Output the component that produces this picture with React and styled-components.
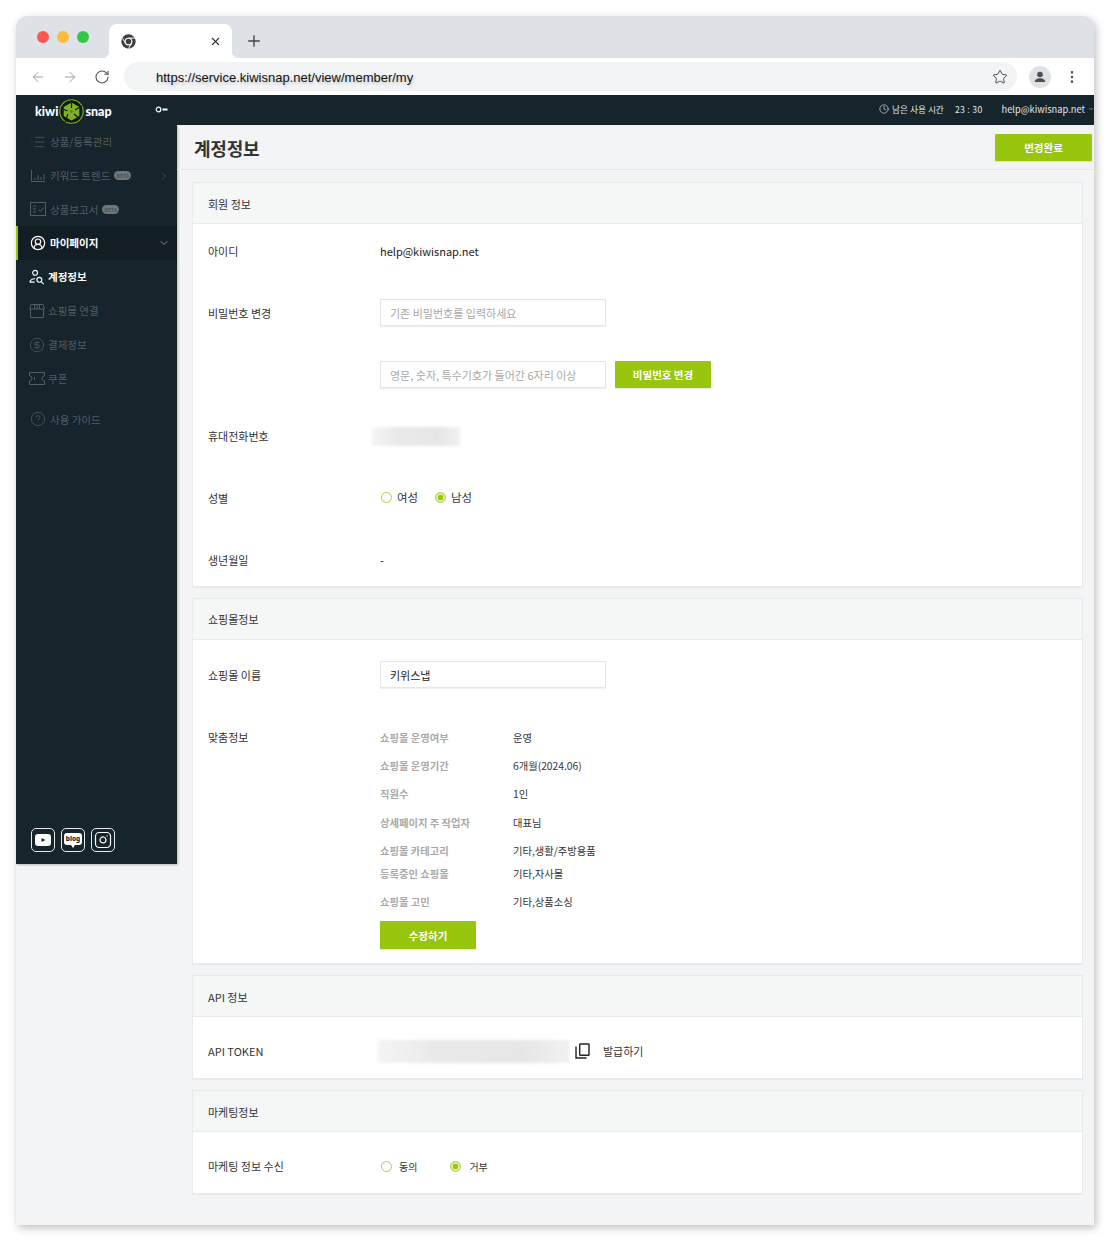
import React from 'react'
import styled, { createGlobalStyle } from 'styled-components'
import { ChevronDown, ChevronRight, Star, MoreVertical, ArrowLeft, ArrowRight, RotateCw, Plus, X, CircleHelp, CircleDollarSign, CircleUserRound, Clock, List, Instagram } from 'lucide-react'

const Global = createGlobalStyle`
    html, body { margin: 0; padding: 0; background: #fff; }
    body { font-family: "Noto Sans CJK KR", "Noto Sans", sans-serif; color: #222; }
    * { box-sizing: border-box; }
`

const green = '#98c60e'
const dark = '#16242b'
const dim = '#525e64'

const Page = styled.div`
    width: 1110px;
    height: 1243px;
    padding: 16px 16px 18px 16px;
    overflow: hidden;
`
const BrowserWindow = styled.div`
    width: 1078px;
    height: 1209px;
    border-radius: 12px 12px 0 0;
    overflow: hidden;
    background: #f3f4f5;
    box-shadow: 2px 3px 8px rgba(0, 0, 0, 0.25);
    display: flex;
    flex-direction: column;
`
const TabStrip = styled.div`
    height: 42px;
    flex: none;
    background: #dee1e6;
    display: flex;
    align-items: flex-end;
    padding-left: 21px;
`
const Dots = styled.div`
    display: flex;
    gap: 8px;
    align-self: flex-start;
    margin-top: 15px;
    margin-right: 20px;
`
const Dot = styled.span`
    width: 12px;
    height: 12px;
    border-radius: 50%;
    background: ${p => p.$color};
`
const Tab = styled.div`
    position: relative;
    width: 123px;
    height: 34px;
    background: #fff;
    border-radius: 8px 8px 0 0;
    display: flex;
    align-items: center;
    justify-content: space-between;
    padding: 0 10px 0 12px;
    color: #333;
    &::before, &::after {
        content: "";
        position: absolute;
        bottom: 0;
        width: 7px;
        height: 7px;
    }
    &::before {
        left: -7px;
        background: radial-gradient(circle at 0 0, transparent 7px, #fff 7.5px);
    }
    &::after {
        right: -7px;
        background: radial-gradient(circle at 100% 0, transparent 7px, #fff 7.5px);
    }
`
const NewTab = styled.div`
    margin-left: 13px;
    height: 34px;
    display: flex;
    align-items: center;
    color: #444;
`
const Toolbar = styled.div`
    height: 37px;
    flex: none;
    background: #fff;
    display: flex;
    align-items: center;
    padding-left: 14px;
    color: #999;
`
const NavIcons = styled.div`
    display: flex;
    gap: 16px;
    width: 94px;
`
const AddressBar = styled.div`
    width: 893px;
    height: 29px;
    border-radius: 15px;
    background: #f1f3f4;
    display: flex;
    align-items: center;
    justify-content: space-between;
    padding: 1px 9px 0 32px;
    font-family: "Liberation Sans", Arial, sans-serif;
    font-size: 13px;
    color: #111;
    text-shadow: 1px 2px 3px rgba(0, 0, 0, 0.2);
`
const Avatar = styled.div`
    width: 22px;
    height: 22px;
    margin-left: 12px;
    border-radius: 50%;
    background: #dfe1e5;
    display: flex;
    align-items: center;
    justify-content: center;
`
const Kebab = styled.div`
    margin-left: 13px;
    color: #555;
    display: flex;
`
const TopBar = styled.div`
    height: 30px;
    flex: none;
    background: ${dark};
    color: #e3e6e8;
    display: flex;
    align-items: center;
    justify-content: space-between;
    font-size: 8.7px;
    padding: 0 0 2px 19px;
`
const Logo = styled.div`
    display: flex;
    align-items: center;
    width: 120px;
    margin-top: 4px;
    font-family: "Lato", "Noto Sans", sans-serif;
    font-weight: 900;
    font-size: 12.5px;
    color: #fff;
    gap: 1px;
`
const KeyMark = styled.div`
    display: flex;
    align-items: center;
    margin-right: auto;
`
const TopInfo = styled.div`
    display: flex;
    align-items: center;
    gap: 3px;
`
const Timer = styled.span`
    margin: 0 16px 0 8px;
    letter-spacing: 0.3px;
`
const Account = styled.span`
    font-size: 9.3px;
`
const AppBody = styled.div`
    flex: 1;
    display: flex;
    align-items: flex-start;
`
const Sidebar = styled.nav`
    width: 161px;
    height: 739px;
    flex: none;
    background: ${dark};
    display: flex;
    flex-direction: column;
    box-shadow: 1px 1px 2px rgba(0, 0, 0, 0.25);
`
const MenuItem = styled.div`
    height: 33.8px;
    flex: none;
    display: flex;
    align-items: center;
    gap: ${p => p.$sub ? 3 : 4}px;
    padding-left: ${p => p.$open ? 12 : p.$sub ? 13 : 14}px;
    padding-bottom: ${p => p.$on ? 1 : 0}px;
    font-size: 10.5px;
    font-weight: ${p => p.$on ? 700 : 400};
    color: ${p => p.$on ? '#fff' : dim};
    background: ${p => p.$open ? '#121e24' : 'transparent'};
    border-left: ${p => p.$open ? `2px solid ${green}` : 'none'};
    margin-top: ${p => p.$gap || 0}px;
`
const MenuIcon = styled.span`
    width: 16px;
    height: 16px;
    flex: none;
    display: flex;
    align-items: center;
    justify-content: center;
`
const Badge = styled.span`
    width: 17px;
    text-align: center;
    overflow: hidden;
    font-size: 5px;
    line-height: 9px;
    height: 9px;
    border-radius: 5px;
    background: #6c777c;
    color: #48545a;
    font-weight: 700;
`
const Caret = styled.span`
    margin-left: auto;
    margin-right: 7px;
    display: flex;
    color: ${p => p.$color || dim};
`
const Socials = styled.div`
    margin-top: auto;
    margin-bottom: 12px;
    display: flex;
    gap: 6px;
    padding-left: 15px;
`
const SocialBox = styled.div`
    width: 24px;
    height: 24px;
    border: 1px solid #e4e8ea;
    border-radius: 5px;
    display: flex;
    align-items: center;
    justify-content: center;
    color: #fff;
`
const BlogBubble = styled.span`
    position: relative;
    background: #fff;
    color: ${dark};
    font-size: 6.5px;
    line-height: 12px;
    font-weight: 800;
    font-family: "Noto Sans", sans-serif;
    padding: 0 2px;
    border-radius: 3px;
    margin-top: -2px;
    &::after {
        content: "";
        position: absolute;
        left: 7px;
        bottom: -3px;
        border-left: 2px solid transparent;
        border-right: 2px solid transparent;
        border-top: 3px solid #fff;
    }
`
const Main = styled.main`
    flex: 1;
    min-width: 0;
`
const PageHead = styled.div`
    height: 45px;
    border-bottom: 1px solid #e6e7e8;
    display: flex;
    align-items: center;
    justify-content: space-between;
    padding: 0 2px 0 17px;
`
const PageTitle = styled.h1`
    margin: 0;
    padding-top: 2px;
    font-size: 18px;
    font-weight: 700;
    color: #333;
    letter-spacing: -0.2px;
`
const GreenButton = styled.button`
    width: ${p => p.$w}px;
    height: ${p => p.$h || 27}px;
    margin-top: ${p => p.$top || 0}px;
    margin-left: ${p => p.$left || 0}px;
    border: none;
    border-radius: 1px;
    background: ${green};
    color: #fff;
    font-family: inherit;
    font-size: 10.5px;
    font-weight: 700;
    padding: 0;
    box-shadow: 0 1px 1px rgba(0, 0, 0, 0.1);
`
const Sections = styled.div`
    padding: 12px 11px 0 15px;
    display: flex;
    flex-direction: column;
    gap: 11px;
`
const Section = styled.section`
    background: #fff;
    border: 1px solid #e8e9ea;
    box-shadow: 0 1px 1px rgba(0, 0, 0, 0.04);
`
const SectionHead = styled.div`
    height: 41px;
    background: #f5f6f6;
    border-bottom: 1px solid #e9eaeb;
    display: flex;
    align-items: center;
    padding: 1px 0 0 15px;
    font-size: 11px;
    color: #333;
`
const SectionBody = styled.div`
    padding: ${p => p.$pad};
    display: flex;
    flex-direction: column;
    gap: ${p => p.$gap || 0}px;
`
const Row = styled.div`
    display: grid;
    grid-template-columns: 172px 1fr;
    align-items: ${p => p.$top ? 'start' : 'center'};
    min-height: 28px;
    color: #222;
`
const Label = styled.div`
    font-size: 11px;
    color: #333;
    line-height: ${p => p.$top ? '28px' : 'normal'};
`
const Value = styled.div`
    display: flex;
    align-items: center;
    font-size: 11px;
`
const TextBox = styled.div`
    width: 226px;
    height: 27px;
    border: 1px solid #e6e6e6;
    box-shadow: 0 1px 1px rgba(0, 0, 0, 0.06);
    background: #fff;
    display: flex;
    align-items: center;
    padding-left: 9px;
    font-size: 11px;
    color: ${p => p.$filled ? '#222' : '#a8a8a8'};
`
const Blurred = styled.div`
    width: ${p => p.$w}px;
    height: ${p => p.$h}px;
    margin-left: ${p => p.$left}px;
    background: linear-gradient(90deg, #f4f4f4, #e9e9e9 30%, #e6e6e6 75%, #f1f1f1);
    filter: blur(1.5px);
`
const Radios = styled.div`
    display: flex;
    align-items: center;
    padding-left: 1px;
    padding-bottom: ${p => p.$lift || 0}px;
`
const RadioLabel = styled.label`
    display: flex;
    align-items: center;
    font-size: ${p => p.$size}px;
    color: #333;
    gap: ${p => p.$gap}px;
    margin-right: ${p => p.$right}px;
`
const RadioCircle = styled.span`
    width: 11px;
    height: 11px;
    border-radius: 50%;
    border: 1px solid #abd13f;
    background: ${p => p.$on ? `radial-gradient(circle, #98c60e 0 2.4px, #dcebb0 3px)` : '#fff'};
`
const InfoTable = styled.div`
    display: flex;
    flex-direction: column;
`
const InfoRow = styled.div`
    display: grid;
    grid-template-columns: 133px 1fr;
    align-items: center;
    height: 28.3px;
    margin-top: ${p => p.$tight ? -5 : 0}px;
`
const InfoKey = styled.div`
    font-size: 10.3px;
    font-weight: 700;
    color: #a9a9a9;
`
const InfoValue = styled.div`
    font-size: 10.3px;
    color: #333;
`
const Issue = styled.span`
    font-size: 11px;
    color: #333;
    margin-left: 13px;
`
const CopyWrap = styled.span`
    display: flex;
    margin-left: 5px;
`

const ChromeLogo = () => (
    <svg width="15" height="15" viewBox="0 0 24 24">
        <circle cx="12" cy="12" r="11.5" fill="#3c4043" />
        <path d="M12 6.5h10M7.2 15L2.4 6.7M16.8 15l-5 8.6" stroke="#fff" strokeWidth="1.6" />
        <circle cx="12" cy="12" r="6.2" fill="#fff" />
        <circle cx="12" cy="12" r="4.4" fill="#3c4043" />
    </svg>
)

const Aperture = () => (
    <svg width="25" height="25" viewBox="0 0 25 25">
        <circle cx="12.5" cy="12.5" r="11.7" fill="#101a14" stroke="#8ab52b" strokeWidth="1.1" />
        <path d="M12.5 3.5l7.8 4.5v9l-7.8 4.5-7.8-4.5v-9z" fill="#7fb02a" />
        <path d="M12.5 1v8M23 7l-7 4M21 20l-6-5M6 23l3-8M1.5 9l7 3" stroke="#101a14" strokeWidth="1.1" />
        <circle cx="12.5" cy="12.5" r="1.2" fill="#4f7a1b" />
    </svg>
)

const ChartIcon = () => (
    <svg width="16" height="14" viewBox="0 0 16 14" fill="none" stroke={dim} strokeWidth="1">
        <path d="M1.5 1v11.5H15M5 11V9M8 11V6M11 11V8M14 11V5" />
    </svg>
)

const ReportIcon = () => (
    <svg width="16" height="14" viewBox="0 0 16 14" fill="none" stroke={dim} strokeWidth="1">
        <rect x="0.5" y="0.5" width="15" height="13" />
        <path d="M3 4h3M3 7h3M3 10h3M8.5 7.5l2 2 3-4" />
    </svg>
)

const StoreIcon = () => (
    <svg width="16" height="14" viewBox="0 0 16 14" fill="none" stroke={dim} strokeWidth="1">
        <path d="M2 .5h12l1.5 4.5h-15zM1.5 5v8.500h13V5M5.500 .5V5M8 .5V5M10.500 .5V5" />
    </svg>
)

const TicketIcon = () => (
    <svg width="16" height="13" viewBox="0 0 16 13" fill="none" stroke={dim} strokeWidth="1">
        <path d="M.5 .5h15V4a2.500 2.500 0 0 0 0 5v3.500H.5V9a2.500 2.500 0 0 0 0-5zM5.500 5v3" />
    </svg>
)

const UserSearchIcon = () => (
    <svg width="17" height="16" viewBox="0 0 17 16" fill="none" stroke="#fff" strokeWidth="1.2">
        <circle cx="6.5" cy="3.6" r="2.6" />
        <path d="M1 13.5c0-1 .6-2 1.6-2.7 1-.7 2.4-1 4-.9M1 13.5h5" />
        <circle cx="11" cy="11" r="2.6" />
        <path d="M13 13l2.6 2.6" />
    </svg>
)

const PersonIcon = () => (
    <svg width="14" height="14" viewBox="0 0 14 14" fill="#4a4f55">
        <circle cx="7" cy="4.5" r="2.8" />
        <path d="M1.8 12c0-2.4 2.4-3.7 5.2-3.7s5.2 1.3 5.2 3.7z" />
    </svg>
)

const YoutubeIcon = () => (
    <svg width="16" height="12" viewBox="0 0 16 12">
        <rect width="16" height="12" rx="3" fill="#fff" />
        <path d="M6.5 4l4 2-4 2z" fill={dark} />
    </svg>
)

const CopyIcon = () => (
    <svg width="15" height="16" viewBox="0 0 15 16" fill="none" stroke="#222" strokeWidth="1.4">
        <rect x="4.7" y="1" width="9.3" height="11.3" rx="0.6" />
        <path d="M1 3.5V15h10.5" />
    </svg>
)

const Radio = ({ on, label, gap, right, size = 11.4 }) => (
    <RadioLabel $gap={gap} $right={right} $size={size}>
        <RadioCircle $on={on} />
        {label}
    </RadioLabel>
)

const infoRows = [
    ['쇼핑몰 운영여부', '운영'],
    ['쇼핑몰 운영기간', '6개월(2024.06)'],
    ['직원수', '1인'],
    ['상세페이지 주 작업자', '대표님'],
    ['쇼핑몰 카테고리', '기타,생활/주방용품'],
    ['등록중인 쇼핑몰', '기타,자사몰', true],
    ['쇼핑몰 고민', '기타,상품소싱'],
]

export default function App() {
    return (
        <Page>
            <Global />
            <BrowserWindow>
                <TabStrip>
                    <Dots>
                        <Dot $color="#fc5753" />
                        <Dot $color="#fdbc40" />
                        <Dot $color="#33c748" />
                    </Dots>
                    <Tab>
                        <ChromeLogo />
                        <X size={13} strokeWidth={2} />
                    </Tab>
                    <NewTab><Plus size={18} strokeWidth={1.8} /></NewTab>
                </TabStrip>
                <Toolbar>
                    <NavIcons>
                        <ArrowLeft size={16} strokeWidth={1.4} />
                        <ArrowRight size={16} strokeWidth={1.4} />
                        <RotateCw size={16} strokeWidth={1.6} color="#555" />
                    </NavIcons>
                    <AddressBar>
                        <span>https://service.kiwisnap.net/view/member/my</span>
                        <Star size={16} strokeWidth={1.4} color="#444" />
                    </AddressBar>
                    <Avatar><PersonIcon /></Avatar>
                    <Kebab><MoreVertical size={16} strokeWidth={2} /></Kebab>
                </Toolbar>
                <TopBar>
                    <Logo>
                        kiwi
                        <Aperture />
                        snap
                    </Logo>
                    <KeyMark>
                        <svg width="13" height="7" viewBox="0 0 13 7" fill="none" stroke="#fff" strokeWidth="1.2">
                            <circle cx="3.5" cy="3.5" r="2.3" />
                            <path d="M7.5 3.5h5" strokeWidth="1.8" />
                        </svg>
                    </KeyMark>
                    <TopInfo>
                        <Clock size={10} strokeWidth={1.6} />
                        <span>남은 사용 시간</span>
                        <Timer>23 : 30</Timer>
                        <Account>help@kiwisnap.net</Account>
                        <ChevronDown size={6} strokeWidth={2} />
                    </TopInfo>
                </TopBar>
                <AppBody>
                    <Sidebar>
                        <MenuItem><MenuIcon><List size={18} strokeWidth={1.2} /></MenuIcon>상품/등록관리</MenuItem>
                        <MenuItem>
                            <MenuIcon><ChartIcon /></MenuIcon>키워드 트렌드<Badge>BETA</Badge>
                            <Caret><ChevronRight size={12} strokeWidth={1.3} /></Caret>
                        </MenuItem>
                        <MenuItem><MenuIcon><ReportIcon /></MenuIcon>상품보고서<Badge>BETA</Badge></MenuItem>
                        <MenuItem $on $open>
                            <MenuIcon><CircleUserRound size={18} strokeWidth={1.8} /></MenuIcon>마이페이지
                            <Caret $color="#bfc5c8"><ChevronDown size={12} strokeWidth={1.3} /></Caret>
                        </MenuItem>
                        <MenuItem $sub $on><MenuIcon><UserSearchIcon /></MenuIcon>계정정보</MenuItem>
                        <MenuItem $sub><MenuIcon><StoreIcon /></MenuIcon>쇼핑몰 연결</MenuItem>
                        <MenuItem $sub><MenuIcon><CircleDollarSign size={18} strokeWidth={1.1} /></MenuIcon>결제정보</MenuItem>
                        <MenuItem $sub><MenuIcon><TicketIcon /></MenuIcon>쿠폰</MenuItem>
                        <MenuItem $gap={7}><MenuIcon><CircleHelp size={18} strokeWidth={1.1} /></MenuIcon>사용 가이드</MenuItem>
                        <Socials>
                            <SocialBox><YoutubeIcon /></SocialBox>
                            <SocialBox><BlogBubble>blog</BlogBubble></SocialBox>
                            <SocialBox><Instagram size={18} strokeWidth={1.6} /></SocialBox>
                        </Socials>
                    </Sidebar>
                    <Main>
                        <PageHead>
                            <PageTitle>계정정보</PageTitle>
                            <GreenButton $w={97}>변경완료</GreenButton>
                        </PageHead>
                        <Sections>
                            <Section>
                                <SectionHead>회원 정보</SectionHead>
                                <SectionBody $gap={33.8} $pad="13px 15px 12px">
                                    <Row><Label>아이디</Label><Value>help@kiwisnap.net</Value></Row>
                                    <Row><Label>비밀번호 변경</Label><Value><TextBox>기존 비밀번호를 입력하세요</TextBox></Value></Row>
                                    <Row>
                                        <span />
                                        <Value>
                                            <TextBox>영문, 숫자, 특수기호가 들어간 6자리 이상</TextBox>
                                            <GreenButton $w={96} $left={9}>비밀번호 변경</GreenButton>
                                        </Value>
                                    </Row>
                                    <Row><Label>휴대전화번호</Label><Value><Blurred $w={88} $h={19} $left={-8} /></Value></Row>
                                    <Row>
                                        <Label>성별</Label>
                                        <Radios $lift={2}>
                                            <Radio label="여성" gap={5} right={17} />
                                            <Radio on label="남성" gap={5} right={0} />
                                        </Radios>
                                    </Row>
                                    <Row><Label>생년월일</Label><Value>-</Value></Row>
                                </SectionBody>
                            </Section>
                            <Section>
                                <SectionHead>쇼핑몰정보</SectionHead>
                                <SectionBody $pad="21px 15px 14px" $gap={34}>
                                    <Row><Label>쇼핑몰 이름</Label><Value><TextBox $filled>키위스냅</TextBox></Value></Row>
                                    <Row $top>
                                        <Label $top>맞춤정보</Label>
                                        <InfoTable>
                                            {infoRows.map(([k, v, tight]) => (
                                                <InfoRow key={k} $tight={tight}>
                                                    <InfoKey>{k}</InfoKey>
                                                    <InfoValue>{v}</InfoValue>
                                                </InfoRow>
                                            ))}
                                            <GreenButton $w={96} $h={28} $top={5}>수정하기</GreenButton>
                                        </InfoTable>
                                    </Row>
                                </SectionBody>
                            </Section>
                            <Section>
                                <SectionHead>API 정보</SectionHead>
                                <SectionBody $pad="20px 15px 13px">
                                    <Row>
                                        <Label>API TOKEN</Label>
                                        <Value>
                                            <Blurred $w={192} $h={23} $left={-2} />
                                            <CopyWrap><CopyIcon /></CopyWrap>
                                            <Issue>발급하기</Issue>
                                        </Value>
                                    </Row>
                                </SectionBody>
                            </Section>
                            <Section>
                                <SectionHead>마케팅정보</SectionHead>
                                <SectionBody $pad="20px 15px 13px">
                                    <Row>
                                        <Label>마케팅 정보 수신</Label>
                                        <Radios>
                                            <Radio label="동의" gap={7} right={33} size={10} />
                                            <Radio on label="거부" gap={8} right={0} size={10} />
                                        </Radios>
                                    </Row>
                                </SectionBody>
                            </Section>
                        </Sections>
                    </Main>
                </AppBody>
            </BrowserWindow>
        </Page>
    )
}
